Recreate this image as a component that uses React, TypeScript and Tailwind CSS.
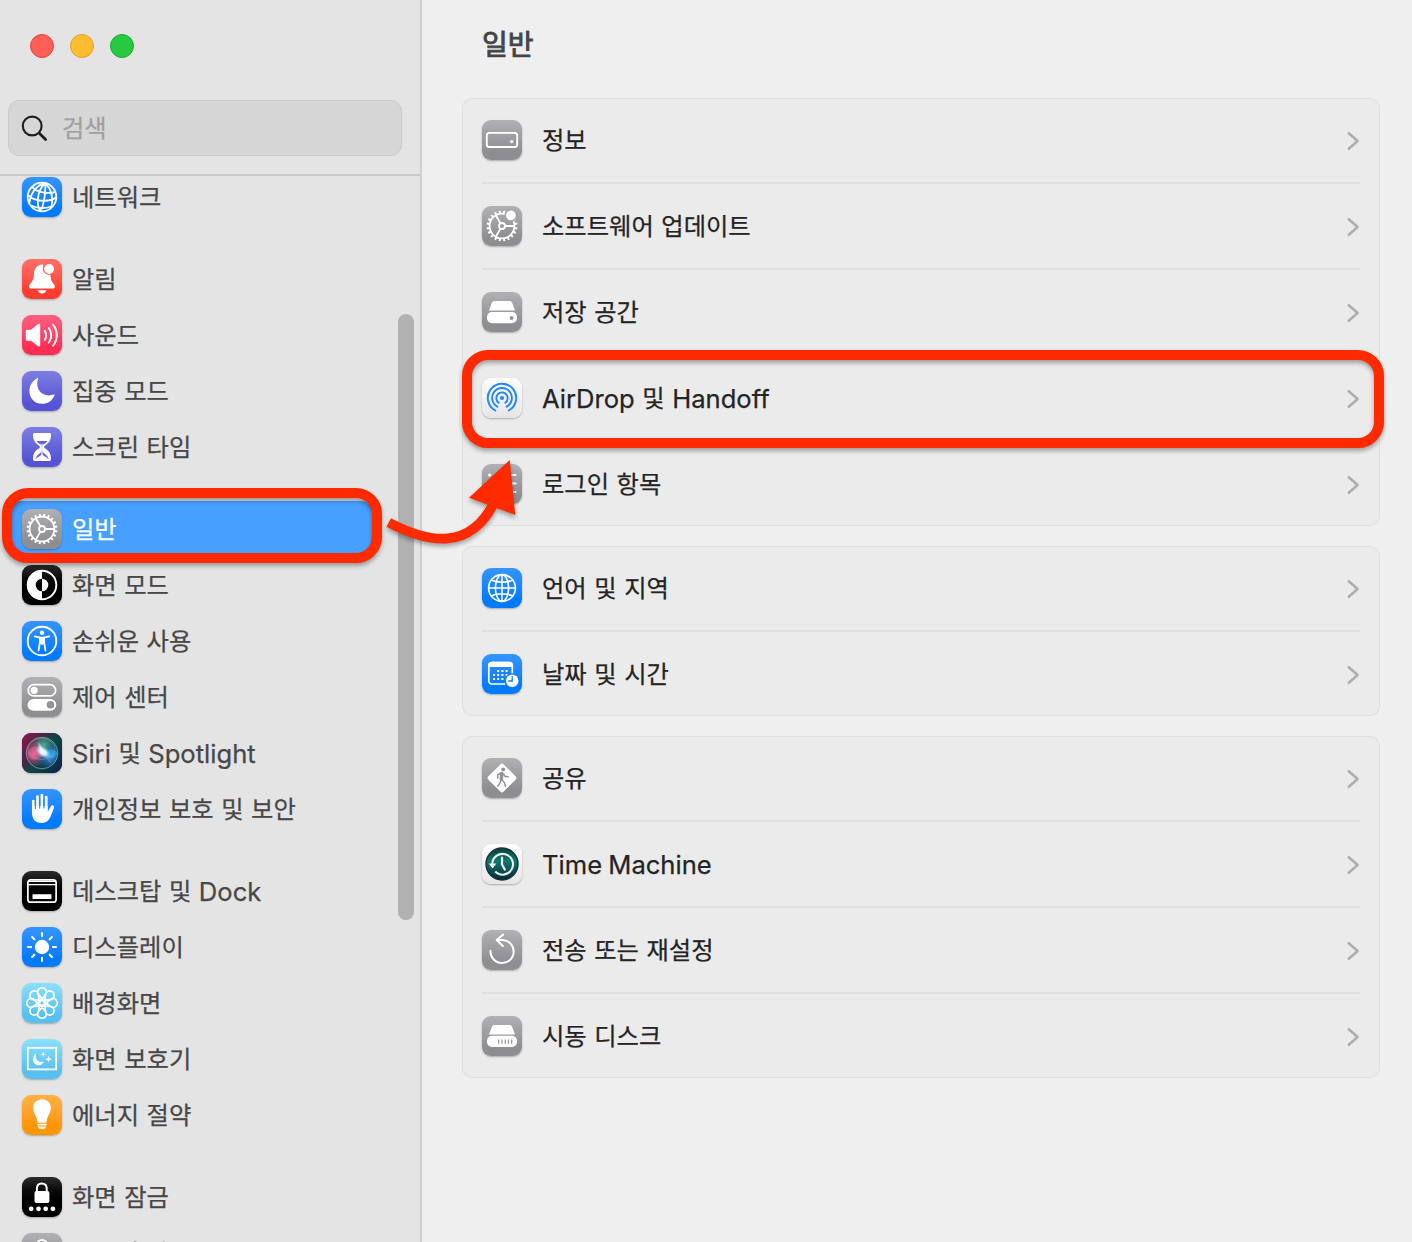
import type { ReactNode } from 'react';

type Tone = 'blue' | 'red' | 'pink' | 'indigo' | 'gray' | 'black' | 'sky' | 'orange' | 'white' | 'siri';

interface Item {
  label: ReactNode;
  tone: Tone;
  icon: ReactNode;
  selected?: boolean;
}

const tones: Record<Tone, string> = {
  blue: 'bg-linear-to-b from-[#3395ff] to-[#007aff] to-80%',
  red: 'bg-linear-to-b from-[#ff7068] to-[#ff3b30] to-80%',
  pink: 'bg-linear-to-b from-[#ff5e82] to-[#ff2d55] to-80%',
  indigo: 'bg-linear-to-b from-[#7f7ee2] to-[#5654d4] to-80%',
  gray: 'bg-linear-to-b from-[#b1b0b5] to-[#8e8d92] to-80%',
  black: 'bg-linear-to-b from-[#2b2b2b] to-[#000000] to-70%',
  sky: 'bg-linear-to-b from-[#8be0fb] to-[#57c0f0] to-80%',
  orange: 'bg-linear-to-b from-[#ffb041] to-[#ff9500] to-80%',
  white: 'bg-linear-to-b from-[#fdfdfd] to-[#e6e6e8]',
  siri: 'bg-[#15263a]',
};

function Tile({ tone, children }: { tone: Tone; children: ReactNode }) {
  return (
    <div className={`h-10 w-10 shrink-0 overflow-hidden rounded-[9px] shadow-[0_1px_2px_rgba(0,0,0,0.28)] ${tones[tone]}`}>
      <svg viewBox="0 0 40 40" className="block h-10 w-10" fill="none" stroke="none">
        {children}
      </svg>
    </div>
  );
}

function Latin({ children }: { children: ReactNode }) {
  return <span className="relative top-px text-[25.6px] tracking-[0px] [word-spacing:-1px]">{children}</span>;
}

const TEETH = Array.from({ length: 20 }, (_, i) => i * 18);

function GearShape() {
  return (
    <g stroke="#fff" strokeWidth="1.8">
      <circle cx="20" cy="20" r="12.4" />
      <circle cx="20" cy="20" r="3" />
      <path d="M23 20H32.4M18.5 17.4L13.8 9.3M18.5 22.6L13.8 30.7" />
      {TEETH.map((a) => (
        <path key={a} d="M20 7.5V4.6" strokeWidth="2" transform={`rotate(${a + 9} 20 20)`} />
      ))}
    </g>
  );
}

const network = (
  <g stroke="#fff" strokeWidth="1.8">
    <circle cx="20" cy="20" r="14.3" />
    <path d="M23.5 6.2C18.5 9.5 15.5 17 15.8 25C15.9 29 16.8 32 18.3 34M23.5 6.2C16 7.5 9 14 7.3 26M23.5 6.2C23.2 15 23.5 26 18.3 34M23.5 6.2C29 12 31.8 20 29.3 30.7M10.2 10C14 15 27 17.5 33.2 14.8M6 18C11 24 27 26 34 20.5M9 28.5C14.5 31.5 24.5 32 30.5 29" />
  </g>
);

const bell = (
  <g fill="#fff">
    <path d="M20 5.6C14.8 6.1 12.1 9.8 12 14.6C11.9 20.4 10.2 22.6 7.6 25.8C6.5 27.5 7 29.6 9 29.6H31C33 29.6 33.4 27.7 32.3 25.8C29.8 22.8 28.6 20.4 28.3 15.7A6.2 6.2 0 0 1 21 8.1A6.3 6.3 0 0 1 21.5 5.7Z" />
    <circle cx="27.1" cy="10" r="4.9" />
    <path d="M15.7 31.2H24.4C23.8 33.3 22.2 34.4 20 34.4C17.9 34.4 16.3 33.3 15.7 31.2Z" />
  </g>
);

const sound = (
  <g>
    <path d="M5.3 14.8H9L15.8 9.3C17 8.4 18.2 8.7 18.2 10V30.2C18.2 31.5 17 31.8 15.8 30.9L9 25.7H5.3C4.3 25.7 3.8 25.2 3.8 24.2V16.3C3.8 15.3 4.3 14.8 5.3 14.8Z" fill="#fff" />
    <g stroke="#fff" strokeWidth="2" strokeLinecap="round">
      <path d="M22.8 15.9C24.3 18.5 24.3 22.1 22.8 24.8M26.9 13.1C29.9 17.2 29.9 23.4 26.9 27.5M31.1 9.9C36 16 36 24.8 31.1 30.6" />
    </g>
  </g>
);

const moon = (
  <path d="M16 7.7C12.6 18.3 20.7 27.2 31.6 23.6C32.4 23.4 32.8 23.9 32.4 24.7C29.8 30 25.7 32.8 20.2 32.8C12.8 32.8 7.4 27.3 7.4 20.2C7.4 14.8 10.2 10.2 15 7.2C15.7 6.8 16.2 7.1 16 7.7Z" fill="#fff" />
);

const hourglass = (
  <g>
    <path d="M12.7 6H27.3C28.4 6 29 6.6 29 7.6C29 13.5 26.8 16.4 23.1 18.4C21.8 19.2 21.8 20.8 23.1 21.6C26.8 23.6 29 26.4 29 32.3C29 33.4 28.4 34 27.3 34H12.7C11.6 34 11 33.4 11 32.3C11 26.4 13.2 23.6 16.9 21.6C18.2 20.8 18.2 19.2 16.9 18.4C13.2 16.4 11 13.5 11 7.6C11 6.6 11.6 6 12.7 6Z" fill="#fff" />
    <path d="M14.7 14H25.3C24.4 15.5 23.2 16.5 21.6 17.3C20.4 18 20.3 19 20.3 20V23.5C20.3 25.2 22.3 26.3 24.2 28C25.5 29.2 26.3 30.5 26.5 32H13.5C13.7 30.5 14.5 29.2 15.8 28C17.7 26.3 19.7 25.2 19.7 23.5V20C19.7 19 19.6 18 18.4 17.3C16.8 16.5 15.6 15.5 14.7 14Z" fill="#6362d8" />
    <path d="M14 32C14.5 30.5 16.8 29.7 18.3 28.8C19.2 28.2 19.5 27 19.5 25V16.8H20.5V25C20.5 27 20.8 28.2 21.7 28.8C23.2 29.7 25.5 30.5 26 32Z" fill="#fff" />
  </g>
);

const appearance = (
  <g>
    <circle cx="20" cy="20" r="14.3" stroke="#fff" strokeWidth="1.9" />
    <path d="M20 5.2A14.8 14.8 0 0 0 20 34.8V26.3A6.3 6.3 0 0 1 20 13.7Z" fill="#fff" />
    <path d="M20 13.7A6.3 6.3 0 0 1 20 26.3Z" fill="#fff" />
  </g>
);

const accessibility = (
  <g>
    <circle cx="20" cy="20" r="14.3" stroke="#fff" strokeWidth="1.9" />
    <circle cx="20" cy="11.7" r="2.2" fill="#fff" />
    <path d="M12.8 15.4L17.9 16.6V21.3L16.5 29.6M27.2 15.4L22.1 16.6V21.3L23.5 29.6" stroke="#fff" strokeWidth="1.8" strokeLinecap="round" strokeLinejoin="round" />
    <path d="M17.2 15.8H22.8V22L20 24L17.2 22Z" fill="#fff" />
  </g>
);

const controls = (
  <g>
    <rect x="6.2" y="7.7" width="27.4" height="11.2" rx="5.6" stroke="#fff" strokeWidth="1.7" />
    <circle cx="12.2" cy="13.3" r="3.6" fill="#fff" />
    <rect x="5.5" y="21.9" width="28.8" height="11.9" rx="5.95" fill="#fff" />
    <circle cx="28.5" cy="27.8" r="3.8" fill="#929196" />
  </g>
);

const siri = (
  <g>
    <defs>
      <linearGradient id="siri-bg" x1="0" y1="0" x2="1" y2="0.75">
        <stop offset="0" stopColor="#9c1747" />
        <stop offset="0.35" stopColor="#4b2347" />
        <stop offset="0.6" stopColor="#0c4842" />
        <stop offset="1" stopColor="#0c2a48" />
      </linearGradient>
      <radialGradient id="siri-pink" cx="0.26" cy="0.52" r="0.42">
        <stop offset="0" stopColor="#f2588f" />
        <stop offset="1" stopColor="#e23d83" stopOpacity="0" />
      </radialGradient>
      <radialGradient id="siri-blue" cx="0.76" cy="0.62" r="0.45">
        <stop offset="0" stopColor="#2ea4f6" />
        <stop offset="1" stopColor="#1450b0" stopOpacity="0" />
      </radialGradient>
      <radialGradient id="siri-green" cx="0.55" cy="0.28" r="0.5">
        <stop offset="0" stopColor="#55b9a0" />
        <stop offset="1" stopColor="#1b7c6c" stopOpacity="0" />
      </radialGradient>
      <radialGradient id="siri-glow">
        <stop offset="0" stopColor="#fff" />
        <stop offset="0.4" stopColor="#f2fdff" stopOpacity="0.9" />
        <stop offset="1" stopColor="#a5ecff" stopOpacity="0" />
      </radialGradient>
    </defs>
    <rect width="40" height="40" fill="url(#siri-bg)" />
    <circle cx="20" cy="20" r="16" fill="url(#siri-green)" />
    <circle cx="20" cy="20" r="16" fill="url(#siri-pink)" />
    <circle cx="20" cy="20" r="16" fill="url(#siri-blue)" />
    <circle cx="20" cy="20" r="15.8" stroke="#8fb4bc" strokeOpacity="0.75" strokeWidth="0.9" />
    <ellipse cx="19.5" cy="16" rx="13.5" ry="10.5" stroke="#9ad6cb" strokeOpacity="0.45" strokeWidth="0.7" />
    <path d="M5.5 21C8 12 18 11 22.5 19C18 28 8 30 5.5 21Z" fill="#ff86b6" fillOpacity="0.3" />
    <path d="M23 20C26 27 33 27 35.5 20C32 15 26 15 23 20Z" fill="#41b5ff" fillOpacity="0.5" />
    <path d="M22 21L29 30" stroke="#ff6e87" strokeOpacity="0.7" strokeWidth="0.9" />
    <ellipse cx="21" cy="19" rx="8.5" ry="5.4" fill="url(#siri-glow)" transform="rotate(35 21 19)" />
    <ellipse cx="19" cy="15.5" rx="8" ry="2.4" fill="url(#siri-glow)" fillOpacity="0.6" transform="rotate(65 19 15.5)" />
  </g>
);

const hand = (
  <g>
    <path d="M11.3 12V23M15.5 7.5V21M19.9 6.2V21M24.2 8V22" stroke="#fff" strokeWidth="2.7" strokeLinecap="round" />
    <path d="M10 17V23.5C10 30.5 13.6 34 19.2 34C24.4 34 26.9 31.5 28.8 27L31.8 19.2C32.3 17.8 32.1 16.9 31.2 16.5C30.2 16.1 29.3 16.6 28.6 17.9L25.6 22.8V17Z" fill="#fff" />
    <path d="M13.4 13V19.5M17.7 10V19M22 10V19" stroke="#2389ff" strokeWidth="1.1" strokeLinecap="round" />
  </g>
);

const dock = (
  <g>
    <rect x="5.9" y="8.8" width="28.2" height="22.4" rx="2.8" stroke="#fff" strokeWidth="1.7" />
    <path d="M6 10.4H34M6 13.6H34" stroke="#fff" strokeWidth="1.2" />
    <rect x="10.5" y="23.3" width="19" height="4.7" rx="0.8" fill="#fff" />
  </g>
);

const display = (
  <g>
    <circle cx="20" cy="20" r="7.2" fill="#fff" />
    {[0, 45, 90, 135, 180, 225, 270, 315].map((a) => (
      <path key={a} d="M20 9.1V6" stroke="#fff" strokeWidth="2.1" strokeLinecap="round" transform={`rotate(${a} 20 20)`} />
    ))}
  </g>
);

const flower = (
  <g stroke="#fff" strokeWidth="1.7">
    {[0, 45, 90, 135, 180, 225, 270, 315].map((a) => (
      <path key={a} d="M21.5 17.8L16.8 11.9A4.3 4.3 0 1 1 23.2 11.9L18.5 17.8" transform={`rotate(${a} 20 20)`} />
    ))}
    <circle cx="20" cy="20" r="2.6" />
  </g>
);

const screensaver = (
  <g>
    <rect x="5.8" y="8.8" width="28.4" height="21.6" stroke="#fff" strokeWidth="1.8" />
    <path d="M14.2 14.3C12.2 20.2 16.4 24.6 22 22.6C20.8 25 18.8 26.2 16.6 26.2C13.4 26.2 11.1 23.7 11.1 20.5C11.1 17.7 12.5 15.4 14.2 14.3Z" fill="#fff" />
    <path d="M21.3 12.3L22.1 14.4L24.1 15.2L22.1 16L21.3 18.1L20.5 16L18.5 15.2L20.5 14.4ZM26.5 16.8L27.4 19.3L29.9 20.2L27.4 21.1L26.5 23.6L25.6 21.1L23.1 20.2L25.6 19.3Z" fill="#fff" />
  </g>
);

const bulb = (
  <g fill="#fff">
    <path d="M20 4.2C14.8 4.2 11.1 7.8 11.1 12.7C11.1 18.5 14.8 20.2 15.3 26.2C15.4 27.2 15.9 27.8 16.8 27.8H23.2C24.1 27.8 24.6 27.2 24.7 26.2C25.2 20.2 28.9 18.5 28.9 12.7C28.9 7.8 25.2 4.2 20 4.2Z" />
    <rect x="15.2" y="28.8" width="9.6" height="1.6" rx="0.8" />
    <path d="M15.8 31.5H24.2C23.8 33.3 22.3 34.3 20 34.3C17.7 34.3 16.2 33.3 15.8 31.5Z" />
  </g>
);

const lock = (
  <g>
    <path d="M14.9 15V11.6C14.9 8.4 17 6.5 19.8 6.5C22.6 6.5 24.7 8.4 24.7 11.6V15" stroke="#fff" strokeWidth="2" />
    <rect x="12.5" y="14" width="14.9" height="12" rx="1.9" fill="#fff" />
    <g fill="#fff">
      <circle cx="9.2" cy="31.8" r="2.4" />
      <circle cx="16.5" cy="31.8" r="2.4" />
      <circle cx="23.7" cy="31.8" r="2.4" />
      <circle cx="30.9" cy="31.8" r="2.4" />
    </g>
  </g>
);

const password = (
  <g>
    <circle cx="20" cy="12" r="5" stroke="#fff" strokeWidth="2" />
    <rect x="11" y="16" width="18" height="14" rx="2" fill="#fff" />
  </g>
);

const about = (
  <g>
    <rect x="4.8" y="12.8" width="30.4" height="14.2" rx="2.6" stroke="#fff" strokeWidth="1.8" />
    <circle cx="29.6" cy="21.6" r="1.7" fill="#fff" />
  </g>
);

const update = (
  <g>
    <GearShape />
    <circle cx="28.9" cy="9.4" r="6.4" fill="#a5a4a9" />
    <circle cx="28.9" cy="9.4" r="4.9" fill="#fff" />
  </g>
);

const driveTop = <path d="M12.5 9H27.5C28.8 9 29.5 9.6 30.1 10.8L33 18.6H7L9.9 10.8C10.5 9.6 11.2 9 12.5 9Z" fill="#fff" />;

const storage = (
  <g>
    {driveTop}
    <rect x="5" y="20" width="30" height="11.2" rx="5" fill="#fff" />
    <circle cx="29.6" cy="26" r="1.9" fill="#929196" />
  </g>
);

const startup = (
  <g>
    {driveTop}
    <rect x="5" y="19.8" width="30" height="11.2" rx="5" fill="#fff" />
    <path d="M16.7 23.6V27.8M20 23.6V27.8M23.3 23.6V27.8M26.5 23.6V27.8M29.7 23.6V27.8" stroke="#929196" strokeWidth="1.2" />
  </g>
);

const airdrop = (
  <g stroke="#1f86fc" strokeWidth="1.9" strokeLinecap="round">
    <circle cx="20" cy="20" r="2.1" fill="#1f86fc" stroke="none" />
    <path d="M16.8 24.8A5.7 5.7 0 1 1 23.2 24.8" />
    <path d="M15.4 28.7A9.9 9.9 0 1 1 24.6 28.7" />
    <path d="M13.3 32.5A14.2 14.2 0 1 1 26.7 32.5" />
  </g>
);

const loginItems = (
  <g stroke="#fff" strokeWidth="2" strokeLinecap="round">
    <path d="M13 11H33.5M13 19.6H33.5M13 28H33.5" />
    <path d="M7.5 11H7.7M7.5 19.6H7.7M7.5 28H7.7" strokeWidth="3" />
  </g>
);

const globe = (
  <g stroke="#fff" strokeWidth="1.6">
    <circle cx="20" cy="20" r="13.4" />
    <ellipse cx="20" cy="20" rx="6.6" ry="13.4" />
    <path d="M20 6.6V33.4M6.6 20H33.4M9.2 12C15 15 25 15 30.8 12M9.2 28C15 25 25 25 30.8 28" />
  </g>
);

const calendar = (
  <g>
    <rect x="6.8" y="8.5" width="23.5" height="21.5" rx="3" stroke="#fff" strokeWidth="1.7" />
    <path d="M6 12C6 9 7.5 7.7 10 7.7H27C29.7 7.7 31.1 9 31.1 12V13H6Z" fill="#fff" />
    <path d="M15.2 17H27M11 21H27M11 25H23" stroke="#fff" strokeWidth="2" strokeDasharray="2 2.2" />
    <circle cx="30.2" cy="26.8" r="7.6" fill="#067dff" />
    <circle cx="30.2" cy="26.8" r="6.3" fill="#fff" />
    <path d="M30.2 22.7V27H26.8" stroke="#067dff" strokeWidth="1.3" strokeLinecap="round" />
  </g>
);

const sharing = (
  <g>
    <rect x="9.2" y="9.2" width="21.6" height="21.6" rx="2.4" fill="#fff" transform="rotate(45 20 20)" />
    <circle cx="21.2" cy="11.4" r="1.9" fill="#929196" />
    <g stroke="#929196" strokeLinecap="round" strokeLinejoin="round">
      <path d="M19.8 15.5L19.3 21.3" strokeWidth="3.4" />
      <path d="M18.8 15L15.7 17V20.2M21.5 16L23 18.3L26.2 18.8M18.9 22L18 25L15.8 28.2M20.3 22L22.3 24.6L23.5 28.3" strokeWidth="1.5" />
    </g>
  </g>
);

const timeMachine = (
  <g>
    <defs>
      <linearGradient id="tm" x1="0" y1="0" x2="0" y2="1">
        <stop offset="0" stopColor="#063d3d" />
        <stop offset="0.4" stopColor="#14776e" />
        <stop offset="1" stopColor="#062b34" />
      </linearGradient>
    </defs>
    <circle cx="20" cy="20" r="16" fill="url(#tm)" stroke="#183239" strokeWidth="1.4" />
    <path d="M10.2 20.1A10.4 10.4 0 1 1 13.2 27.6" stroke="#e8eeec" strokeWidth="2.1" />
    <path d="M6.6 19.4H14.4L10.5 24.4Z" fill="#e8eeec" />
    <path d="M20 13.6V20.4L22.8 25.6" stroke="#e8eeec" strokeWidth="2.2" strokeLinecap="round" />
  </g>
);

const reset = (
  <g stroke="#fff" strokeWidth="2" strokeLinecap="round" strokeLinejoin="round">
    <path d="M8.5 20.8A11.6 11.6 0 1 0 20 9.9H15" />
    <path d="M21.2 4.6L14.7 10L20.8 16" />
  </g>
);

const sidebar: Item[][] = [
  [{ label: '네트워크', tone: 'blue', icon: network }],
  [
    { label: '알림', tone: 'red', icon: bell },
    { label: '사운드', tone: 'pink', icon: sound },
    { label: '집중 모드', tone: 'indigo', icon: moon },
    { label: '스크린 타임', tone: 'indigo', icon: hourglass },
  ],
  [
    { label: '일반', tone: 'gray', icon: <GearShape />, selected: true },
    { label: '화면 모드', tone: 'black', icon: appearance },
    { label: '손쉬운 사용', tone: 'blue', icon: accessibility },
    { label: '제어 센터', tone: 'gray', icon: controls },
    { label: <><Latin>Siri</Latin> 및 <Latin>Spotlight</Latin></>, tone: 'siri', icon: siri },
    { label: '개인정보 보호 및 보안', tone: 'blue', icon: hand },
  ],
  [
    { label: <>데스크탑 및 <Latin>Dock</Latin></>, tone: 'black', icon: dock },
    { label: '디스플레이', tone: 'blue', icon: display },
    { label: '배경화면', tone: 'sky', icon: flower },
    { label: '화면 보호기', tone: 'sky', icon: screensaver },
    { label: '에너지 절약', tone: 'orange', icon: bulb },
  ],
  [
    { label: '화면 잠금', tone: 'black', icon: lock },
    { label: '로그인 암호', tone: 'gray', icon: password },
  ],
];

const cards: Item[][] = [
  [
    { label: '정보', tone: 'gray', icon: about },
    { label: '소프트웨어 업데이트', tone: 'gray', icon: update },
    { label: '저장 공간', tone: 'gray', icon: storage },
    { label: <><Latin>AirDrop</Latin> 및 <Latin>Handoff</Latin></>, tone: 'white', icon: airdrop },
    { label: '로그인 항목', tone: 'gray', icon: loginItems },
  ],
  [
    { label: '언어 및 지역', tone: 'blue', icon: globe },
    { label: '날짜 및 시간', tone: 'blue', icon: calendar },
  ],
  [
    { label: '공유', tone: 'gray', icon: sharing },
    { label: <Latin>Time Machine</Latin>, tone: 'white', icon: timeMachine },
    { label: '전송 또는 재설정', tone: 'gray', icon: reset },
    { label: '시동 디스크', tone: 'gray', icon: startup },
  ],
];

function Sidebar() {
  return (
    <aside className="relative flex w-[422px] shrink-0 flex-col border-r-2 border-[#cecece] bg-[#e4e4e4]">
      <div className="flex gap-4 pt-[34px] pl-[30px]">
        <span className="h-6 w-6 rounded-full border border-[#e2463f] bg-[#ff5f57]" />
        <span className="h-6 w-6 rounded-full border border-[#e0a024] bg-[#febc2e]" />
        <span className="h-6 w-6 rounded-full border border-[#1bac2c] bg-[#28c840]" />
      </div>
      <div className="mt-[42px] ml-2 flex h-14 w-[394px] items-center rounded-[11px] border border-[#cacaca] bg-[#d6d6d6] pl-3">
        <svg viewBox="0 0 28 28" className="h-7 w-7" fill="none" stroke="#1f1f1f" strokeLinecap="round">
          <circle cx="11.2" cy="12" r="9.4" strokeWidth="2.1" />
          <path d="M18.3 19.2L24.6 25.4" strokeWidth="2.8" />
        </svg>
        <span className="ml-[13px] text-[#a0a0a0]">검색</span>
      </div>
      <div className="mt-[18px] h-0.5 shrink-0 bg-[#c8c8c8]" />
      <nav className="flex min-h-0 flex-1 flex-col gap-[26px] overflow-hidden pl-2.5">
        {sidebar.map((group, i) => (
          <ul key={i} className="w-[362px] shrink-0 first:-mt-[7px]">
            {group.map((item, j) => (
              <li
                key={j}
                className={`flex h-14 items-center gap-2.5 rounded-[10px] pl-3 whitespace-nowrap ${item.selected ? 'bg-[#47a0ff] text-white' : 'text-[#474747]'}`}
              >
                <Tile tone={item.tone}>{item.icon}</Tile>
                <span>{item.label}</span>
              </li>
            ))}
          </ul>
        ))}
      </nav>
      <div className="absolute top-[314px] right-1.5 h-[606px] w-4 rounded-full bg-[#b1b1b1]" />
    </aside>
  );
}

function Panel() {
  return (
    <main className="flex flex-1 flex-col bg-[#efefef] pr-8 pl-10">
      <h1 className="flex h-[98px] items-center pb-2 pl-5 text-[28px] text-[#454545] [-webkit-text-stroke:0.9px_#454545]">일반</h1>
      <div className="flex flex-col gap-5">
        {cards.map((card, i) => (
          <ul key={i} className="divide-y-2 divide-[#dfdfdf] rounded-[10px] bg-[#ebebeb] px-5 inset-ring inset-ring-[#dfdfdf]">
            {card.map((item, j) => (
              <li key={j} className="box-content flex h-[84px] items-center whitespace-nowrap text-[#242424]">
                <Tile tone={item.tone}>{item.icon}</Tile>
                <span className="ml-5 flex-1">{item.label}</span>
                <svg viewBox="0 0 14 20" className="mt-0.5 h-5 w-3.5" fill="none" stroke="#adadad" strokeWidth="2.6" strokeLinecap="round" strokeLinejoin="round">
                  <path d="M2.8 2.2L11.6 10L2.8 17.8" />
                </svg>
              </li>
            ))}
          </ul>
        ))}
      </div>
    </main>
  );
}

function Annotations() {
  return (
    <div className="pointer-events-none absolute inset-0 drop-shadow-[0_3px_2px_rgba(0,0,0,0.32)]">
      <div className="absolute top-[488px] left-[2px] h-[75px] w-[380px] rounded-[26px] border-10 border-[#ff2a00]" />
      <div className="absolute top-[350px] left-[462px] h-[98px] w-[922px] rounded-[26px] border-10 border-[#ff2a00]" />
      <svg viewBox="380 450 150 110" className="absolute top-[450px] left-[380px] h-[110px] w-[150px]" fill="none">
        <path d="M388.7 522.5C430 544 470 550 494 503" stroke="#ff2a00" strokeWidth="9.8" />
        <path d="M509.7 460L469 497.7L515.3 515Z" fill="#ff2a00" />
      </svg>
    </div>
  );
}

export default function App() {
  return (
    <div className="relative flex h-[1242px] w-[1412px] overflow-hidden font-['Inter','Noto_Sans_CJK_KR',sans-serif] text-[24.3px] leading-none [word-spacing:0.7px] [-webkit-text-stroke-width:0.25px]">
      <Sidebar />
      <Panel />
      <Annotations />
    </div>
  );
}
